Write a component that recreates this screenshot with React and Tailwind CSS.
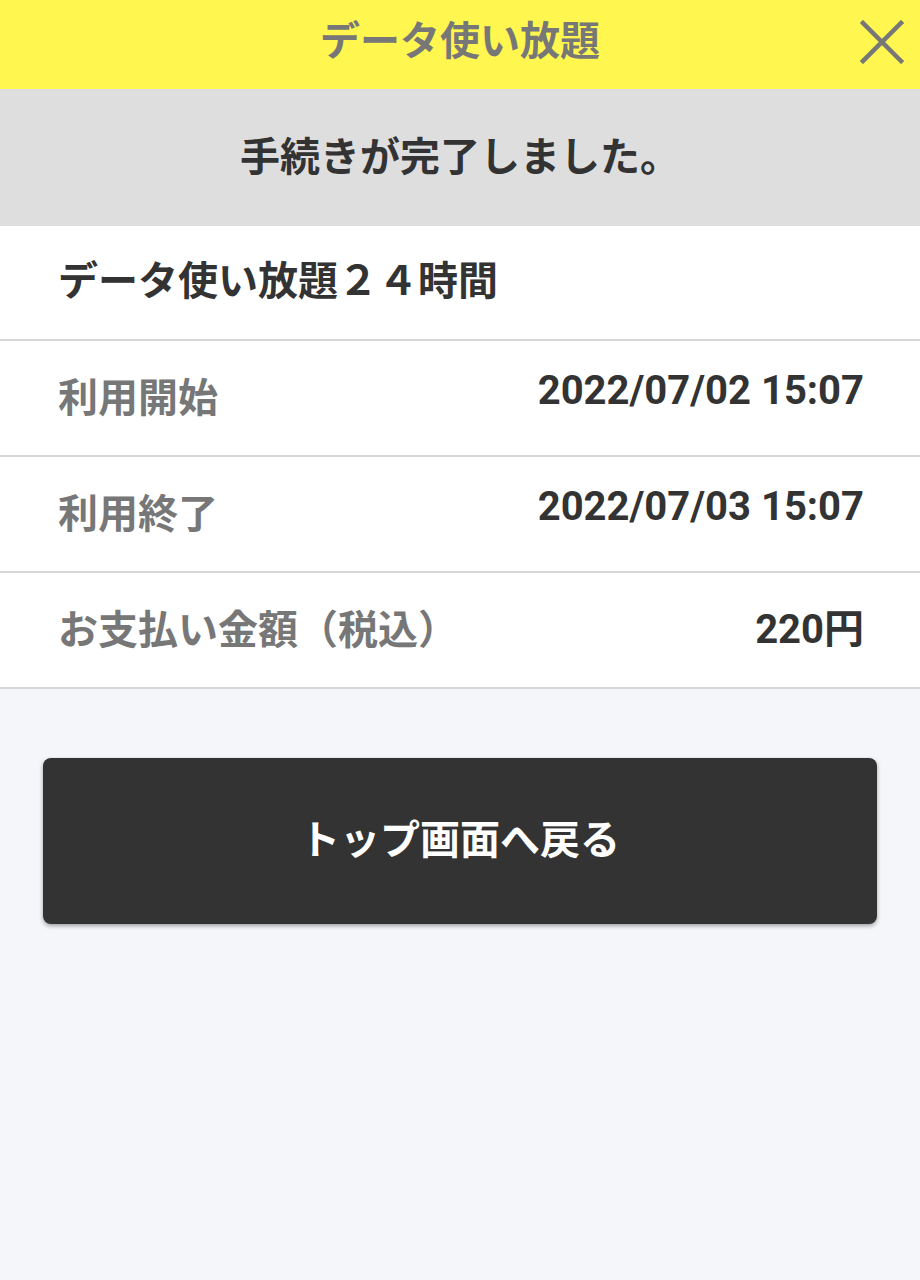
const ROWS = [
  { label: '利用開始', value: '2022/07/02 15:07', lift: true },
  { label: '利用終了', value: '2022/07/03 15:07', lift: true },
  { label: 'お支払い金額（税込）', value: '220円', lift: false },
];

function CloseIcon() {
  return (
    <svg width="44" height="44" viewBox="0 0 44 44" fill="none">
      <path d="M3 3 L41 41 M41 3 L3 41" stroke="#777777" strokeWidth="4.5" strokeLinecap="square" />
    </svg>
  );
}

export default function App() {
  return (
    <div
      className="min-h-[1280px] bg-[#f5f6fa] text-[40px] leading-none"
      style={{ fontFamily: 'Roboto, "Noto Sans CJK JP", sans-serif' }}
    >
      {/* Header */}
      <div className="relative h-[89px] bg-[#fff650] flex items-center justify-center">
        <h1 className="font-bold text-[#777777] text-[40px] -mt-[6px]">データ使い放題</h1>
        <button className="absolute right-[16px] top-[20px]">
          <CloseIcon />
        </button>
      </div>

      {/* Completion message */}
      <div className="h-[137px] bg-[#dedede] flex items-center justify-center">
        <p className="font-bold text-[#333333]">手続きが完了しました。</p>
      </div>

      {/* Details */}
      <div className="bg-white">
        <div className="h-[115px] flex items-center px-[58px] border-b-2 border-[#d6d6d6]">
          <span className="font-bold text-[#333333] -mt-[2px]">データ使い放題２４時間</span>
        </div>
        {ROWS.map(r => (
          <div
            key={r.label}
            className="h-[116px] flex items-center justify-between pl-[58px] pr-[56px] border-b-2 border-[#d6d6d6]"
          >
            <span className="text-[#777777] font-bold mt-[2px]">{r.label}</span>
            <span className={`font-bold text-[#333333] ${r.lift ? '-mt-[14px]' : ''}`}>{r.value}</span>
          </div>
        ))}
      </div>

      {/* Button */}
      <div className="px-[43px] pt-[69px]">
        <button className="w-full h-[166px] rounded-[8px] bg-[#333333] text-white font-bold shadow-[0_2px_4px_rgba(0,0,0,0.35)] flex items-center justify-center">
          トップ画面へ戻る
        </button>
      </div>
    </div>
  );
}
